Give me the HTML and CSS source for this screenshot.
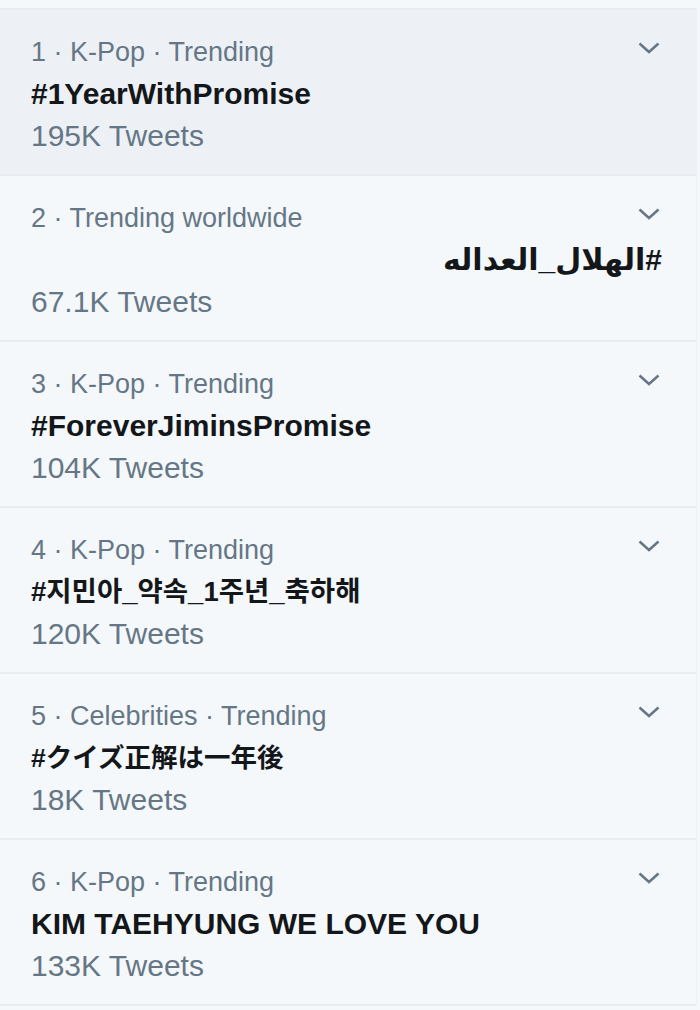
FILE: index.html
```html
<!DOCTYPE html>
<html lang="en">
<head>
    <meta charset="UTF-8">
    <meta name="viewport" content="width=device-width, initial-scale=1.0">
    <title>Trends</title>
    <link rel="stylesheet" href="styles.css">
</head>
<body>

    <ul class="trend-list">
        <li class="trend trend-active">
            <div class="trend-text">
                <p class="trend-meta">1 · K-Pop · Trending</p>
                <p class="trend-name">#1YearWithPromise</p>
                <p class="trend-count">195K Tweets</p>
            </div>
            <svg class="trend-caret" viewBox="0 0 22 12"><path d="M1.5 1.5 L11 10 L20.5 1.5"/></svg>
        </li>
        <li class="trend">
            <div class="trend-text">
                <p class="trend-meta">2 · Trending worldwide</p>
                <p class="trend-name" dir="rtl">#الهلال_العداله</p>
                <p class="trend-count">67.1K Tweets</p>
            </div>
            <svg class="trend-caret" viewBox="0 0 22 12"><path d="M1.5 1.5 L11 10 L20.5 1.5"/></svg>
        </li>
        <li class="trend">
            <div class="trend-text">
                <p class="trend-meta">3 · K-Pop · Trending</p>
                <p class="trend-name">#ForeverJiminsPromise</p>
                <p class="trend-count">104K Tweets</p>
            </div>
            <svg class="trend-caret" viewBox="0 0 22 12"><path d="M1.5 1.5 L11 10 L20.5 1.5"/></svg>
        </li>
        <li class="trend">
            <div class="trend-text">
                <p class="trend-meta">4 · K-Pop · Trending</p>
                <p class="trend-name trend-cjk" lang="ko">#지민아_약속_1주년_축하해</p>
                <p class="trend-count">120K Tweets</p>
            </div>
            <svg class="trend-caret" viewBox="0 0 22 12"><path d="M1.5 1.5 L11 10 L20.5 1.5"/></svg>
        </li>
        <li class="trend">
            <div class="trend-text">
                <p class="trend-meta">5 · Celebrities · Trending</p>
                <p class="trend-name trend-cjk" lang="ja">#クイズ正解は一年後</p>
                <p class="trend-count">18K Tweets</p>
            </div>
            <svg class="trend-caret" viewBox="0 0 22 12"><path d="M1.5 1.5 L11 10 L20.5 1.5"/></svg>
        </li>
        <li class="trend">
            <div class="trend-text">
                <p class="trend-meta">6 · K-Pop · Trending</p>
                <p class="trend-name">KIM TAEHYUNG WE LOVE YOU</p>
                <p class="trend-count">133K Tweets</p>
            </div>
            <svg class="trend-caret" viewBox="0 0 22 12"><path d="M1.5 1.5 L11 10 L20.5 1.5"/></svg>
        </li>
    </ul>

</body>
</html>
```

FILE: styles.css
```css
body {
    margin: 0;
    padding: 0;
    background: #f5f8fa;
    font-family: 'Liberation Sans', Arial, sans-serif;
}
.trend-list {
    list-style: none;
    margin: 8px 0 0 0;
    padding: 0;
    width: 696px;
    border-top: 2px solid #e6ecf0;
    border-right: 1px solid #edf1f4;
}
/* text and caret share one grid cell, caret sits top-right */
.trend {
    display: grid;
    grid-template-areas: "main";
    box-sizing: border-box;
    height: 166px;
    padding: 21px 34px 0 31px;
    border-bottom: 2px solid #e6ecf0;
}
.trend-active {
    background: #edf1f5;
}
.trend-text {
    grid-area: main;
    min-width: 0;
}
.trend-text p {
    margin: 0;
    line-height: 42px;
    white-space: nowrap;
}
.trend-meta {
    font-size: 27px;
    color: #657786;
    padding-right: 40px;
}
.trend-name {
    font-size: 30px;
    font-weight: bold;
    color: #14171a;
    font-family: 'Liberation Sans', 'DejaVu Sans', 'Noto Sans CJK KR', sans-serif;
}
.trend-cjk {
    font-size: 27.5px;
}
.trend-name:lang(ja) {
    font-size: 26.5px;
    font-family: 'Liberation Sans', 'Noto Sans CJK JP', sans-serif;
}
.trend-count {
    font-size: 30px;
    color: #657786;
}
.trend-caret {
    grid-area: main;
    justify-self: end;
    align-self: start;
    width: 22px;
    height: 12px;
    margin-top: 11px;
    margin-right: 2px;
    fill: none;
    stroke: #657786;
    stroke-width: 2.5;
}
```
